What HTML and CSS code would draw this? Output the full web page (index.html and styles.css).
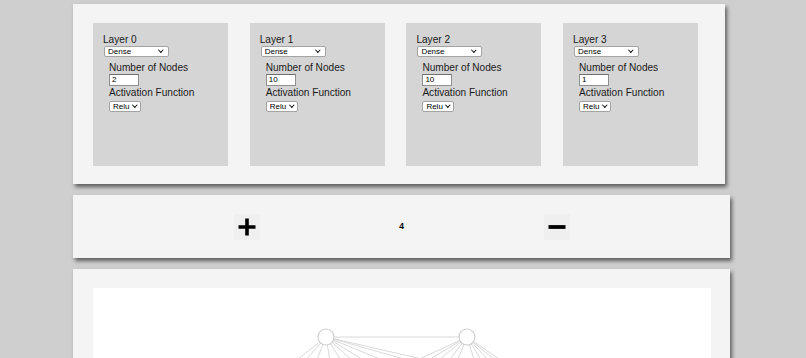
FILE: index.html
```html
<!DOCTYPE html>
<html lang="en">
<head>
  <meta charset="UTF-8">
  <meta name="viewport" content="width=device-width, initial-scale=1.0">
  <title>Network Builder</title>
  <link rel="stylesheet" href="styles.css">
</head>
<body>

<div class="page">
  <!-- Layer settings -->
  <div class="panel layers-panel">
    <div class="layer-card">
      <div class="layer-name">Layer 0</div>
      <span class="select-wrap type-select"><select><option>Dense</option></select></span>
      <div class="layer-options">
        <div class="option-label">Number of Nodes</div>
        <input class="nodes-input" type="text" value="2">
        <div class="option-label">Activation Function</div>
        <span class="select-wrap act-select"><select><option>Relu</option></select></span>
      </div>
    </div>
    <div class="layer-card">
      <div class="layer-name">Layer 1</div>
      <span class="select-wrap type-select"><select><option>Dense</option></select></span>
      <div class="layer-options">
        <div class="option-label">Number of Nodes</div>
        <input class="nodes-input" type="text" value="10">
        <div class="option-label">Activation Function</div>
        <span class="select-wrap act-select"><select><option>Relu</option></select></span>
      </div>
    </div>
    <div class="layer-card">
      <div class="layer-name">Layer 2</div>
      <span class="select-wrap type-select"><select><option>Dense</option></select></span>
      <div class="layer-options">
        <div class="option-label">Number of Nodes</div>
        <input class="nodes-input" type="text" value="10">
        <div class="option-label">Activation Function</div>
        <span class="select-wrap act-select"><select><option>Relu</option></select></span>
      </div>
    </div>
    <div class="layer-card">
      <div class="layer-name">Layer 3</div>
      <span class="select-wrap type-select"><select><option>Dense</option></select></span>
      <div class="layer-options">
        <div class="option-label">Number of Nodes</div>
        <input class="nodes-input" type="text" value="1">
        <div class="option-label">Activation Function</div>
        <span class="select-wrap act-select"><select><option>Relu</option></select></span>
      </div>
    </div>
  </div>

  <!-- Add / remove layers -->
  <div class="panel controls-panel">
    <button class="ctrl-button" title="Add layer">
      <svg width="18" height="18" viewBox="0 0 18 18"><path d="M9 0.5V17.5M0.5 9H17.5" stroke="#000" stroke-width="3.6"/></svg>
    </button>
    <span class="layer-count">4</span>
    <button class="ctrl-button" title="Remove layer">
      <svg width="18" height="18" viewBox="0 0 18 18"><path d="M0.5 9H17.5" stroke="#000" stroke-width="3.8"/></svg>
    </button>
  </div>

  <!-- Network drawing -->
  <div class="panel graph-panel">
    <div class="graph-area">
      <svg class="graph" width="618" height="200" viewBox="0 0 618 200">
        <g stroke="#d9d9d9" stroke-width="1">
          <line x1="241" y1="49" x2="366" y2="49"/>
          <line x1="233" y1="49" x2="127" y2="132"/>
          <line x1="233" y1="49" x2="160" y2="132"/>
          <line x1="233" y1="49" x2="200" y2="132"/>
          <line x1="233" y1="49" x2="247" y2="132"/>
          <line x1="233" y1="49" x2="287" y2="132"/>
          <line x1="233" y1="49" x2="327" y2="132"/>
          <line x1="233" y1="49" x2="367" y2="132"/>
          <line x1="233" y1="49" x2="437" y2="132"/>
          <line x1="233" y1="49" x2="527" y2="132"/>
          <line x1="233" y1="49" x2="595" y2="132"/>
          <line x1="374" y1="49" x2="195" y2="132"/>
          <line x1="374" y1="49" x2="235" y2="132"/>
          <line x1="374" y1="49" x2="272" y2="132"/>
          <line x1="374" y1="49" x2="310" y2="132"/>
          <line x1="374" y1="49" x2="340" y2="132"/>
          <line x1="374" y1="49" x2="400" y2="132"/>
          <line x1="374" y1="49" x2="425" y2="132"/>
          <line x1="374" y1="49" x2="450" y2="132"/>
          <line x1="374" y1="49" x2="475" y2="132"/>
          <line x1="374" y1="49" x2="495" y2="132"/>
        </g>
        <g fill="#fff" stroke="#cfcfcf" stroke-width="1.2">
          <circle cx="233" cy="49" r="8"/>
          <circle cx="374" cy="49" r="8"/>
        </g>
      </svg>
    </div>
  </div>
</div>

</body>
</html>
```

FILE: styles.css
```css
body {
  margin: 0;
  padding: 4px 0 0 73px;
  background-color: #cfcfcf;
  font-family: "Liberation Sans", Arial, sans-serif;
  font-size: 10.1px;
  line-height: 11px;
  color: #1a1a1a;
}
.page {
  width: 657px;
  display: flex;
  flex-direction: column;
  gap: 11px;
}
.panel {
  background-color: #f4f4f4;
  box-shadow: 2px 3px 4px rgba(0, 0, 0, 0.55);
}
.layers-panel {
  width: 652px;
  box-sizing: border-box;
  padding: 19px 0 18px 20px;
  display: flex;
  gap: 21.7px;
}
.layer-card {
  width: 135px;
  height: 143px;
  box-sizing: border-box;
  padding: 10.5px 10px;
  background-color: #d5d5d5;
}
.layer-name {
  height: 11px;
}
.select-wrap {
  position: relative;
  display: block;
  margin-top: 1px;
}
.select-wrap select {
  display: block;
  appearance: none;
  -webkit-appearance: none;
  margin: 0 0 0 1px;
  height: 11px;
  padding: 0 0 0 3px;
  border: 1px solid #a3a3a3;
  border-radius: 2px;
  background-color: #fff;
  font-family: "Liberation Sans", Arial, sans-serif;
  font-size: 8px;
  line-height: 9px;
  color: #000;
  box-sizing: border-box;
}
.select-wrap::after {
  content: "";
  position: absolute;
  top: 2.5px;
  width: 2.6px;
  height: 2.6px;
  border-right: 1.5px solid #111;
  border-bottom: 1.5px solid #111;
  transform: rotate(45deg);
}
.type-select select {
  width: 65px;
}
.type-select::after {
  left: 56px;
}
.act-select {
  margin-top: 3px;
}
.act-select select {
  width: 32px;
  margin-left: 0;
}
.act-select::after {
  left: 24px;
}
.layer-options {
  margin-left: 6px;
  padding-top: 5px;
}
.option-label {
  height: 11px;
}
.nodes-input {
  display: block;
  width: 30px;
  height: 12px;
  box-sizing: border-box;
  margin: 1px 0 1px 0;
  padding: 0 0 0 2px;
  border: 1px solid #8f8f8f;
  border-top-color: #6f6f6f;
  background-color: #fff;
  font-family: "Liberation Sans", Arial, sans-serif;
  font-size: 8px;
  color: #000;
}
.controls-panel {
  height: 63px;
  display: flex;
  align-items: center;
  justify-content: center;
  gap: 139px;
}
.ctrl-button {
  width: 26px;
  height: 26px;
  padding: 0;
  border: none;
  background-color: #efefef;
  display: flex;
  align-items: center;
  justify-content: center;
}
.layer-count {
  font-weight: bold;
  font-size: 8.5px;
  width: 6px;
  text-align: center;
  color: #000;
}
.graph-panel {
  height: 300px;
  box-sizing: border-box;
  padding: 19px 19px 0 20px;
}
.graph-area {
  background-color: #fff;
  height: 281px;
}
.graph {
  display: block;
}
```
